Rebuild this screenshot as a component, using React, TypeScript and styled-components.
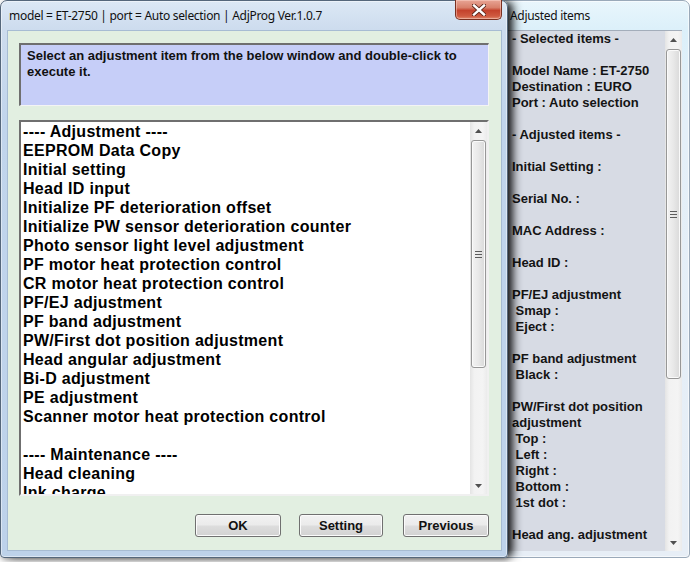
import React from 'react';
import styled, { createGlobalStyle } from 'styled-components';

const GlobalStyle = createGlobalStyle`
  html, body {
    margin: 0;
    padding: 0;
    background: #ffffff;
  }
  body {
    width: 690px;
    height: 562px;
    overflow: hidden;
    font-family: "Liberation Sans", Arial, sans-serif;
  }
`;

const Desktop = styled.div`
  position: relative;
  width: 690px;
  height: 562px;
  overflow: hidden;
  background: #ffffff;
`;

const Window = styled.div<{ $left: number; $width: number; $active?: boolean }>`
  position: absolute;
  top: 0;
  left: ${p => p.$left}px;
  width: ${p => p.$width}px;
  height: 558px;
  box-sizing: border-box;
  display: flex;
  flex-direction: column;
  border: 1px solid ${p => (p.$active ? '#55677b' : '#9aa9b9')};
  border-radius: 7px 7px 4px 4px;
  padding: ${p => (p.$active ? '0 5px 6px 6px' : '0 7px 6px 3px')};
  background: ${p =>
    p.$active
      ? 'linear-gradient(to bottom, #dce8f5 0px, #cddcee 28px, #c1d5ec 120px, #bdd2ea 100%)'
      : 'linear-gradient(to bottom, #e9f6fc 0px, #dcf0fa 28px, #e4eff8 120px, #e7eef6 100%)'};
  box-shadow: ${p =>
    p.$active
      ? '7px 0 10px -2px rgba(0, 0, 0, 0.85), 1px 2px 6px rgba(0, 0, 0, 0.35), inset 0 0 0 1px rgba(255,255,255,0.45)'
      : 'inset 0 0 0 1px rgba(255,255,255,0.6)'};
  z-index: ${p => (p.$active ? 2 : 1)};
`;

const TitleBar = styled.div<{ $indent: number }>`
  height: 29px;
  flex: none;
  display: flex;
  align-items: center;
  padding-left: ${p => p.$indent}px;
  position: relative;
`;

const TitleText = styled.span`
  font-family: "Noto Sans", "Open Sans", sans-serif;
  font-size: 12px;
  color: #111111;
  white-space: nowrap;
  letter-spacing: -0.3px;
`;

const CloseButton = styled.div`
  position: absolute;
  top: -1px;
  right: 0;
  width: 47px;
  height: 20px;
  box-sizing: border-box;
  border: 1px solid #7a3020;
  border-top: none;
  border-radius: 0 0 5px 5px;
  background: linear-gradient(to bottom, #e8a595 0%, #d8806b 40%, #c4422c 55%, #cf5a40 85%, #e08a6e 100%);
  box-shadow: inset 0 0 0 1px rgba(255, 220, 210, 0.45);
  display: flex;
  align-items: center;
  justify-content: center;
`;

const Client = styled.div`
  flex: 1;
  box-sizing: border-box;
  border: 1px solid #a7bcd3;
  background: #e2efe1;
  padding: 12px 12px 13px 11px;
  display: flex;
  flex-direction: column;
`;

const InfoBox = styled.div`
  height: 63px;
  flex: none;
  box-sizing: border-box;
  background: #c6cef8;
  border-top: 2px solid #6f6f6f;
  border-left: 2px solid #6f6f6f;
  border-right: 1px solid #f4f4f4;
  border-bottom: 1px solid #f4f4f4;
  padding: 3px 8px 0 6px;
  font-size: 13px;
  font-weight: bold;
  line-height: 16px;
  color: #111111;
`;

const ListBox = styled.div`
  margin-top: 14px;
  height: 376px;
  flex: none;
  box-sizing: border-box;
  background: #ffffff;
  border-top: 2px solid #6f6f6f;
  border-left: 2px solid #6f6f6f;
  border-right: 2px solid #f0f0f0;
  border-bottom: 2px solid #f0f0f0;
  display: flex;
  overflow: hidden;
`;

const ListItems = styled.div`
  flex: 1;
  overflow: hidden;
  padding-left: 2px;
`;

const ListItem = styled.div`
  height: 19px;
  line-height: 19px;
  font-size: 16px;
  font-weight: bold;
  letter-spacing: 0.3px;
  color: #000000;
  white-space: pre;
`;

const ButtonRow = styled.div`
  margin-top: 18px;
  display: flex;
  justify-content: flex-end;
  gap: 18px;
`;

const PushButton = styled.button<{ $width: number }>`
  width: ${p => p.$width}px;
  height: 23px;
  box-sizing: border-box;
  border: 1px solid #707070;
  border-radius: 3px;
  background: linear-gradient(to bottom, #f2f2f2 0%, #ebebeb 48%, #dddddd 52%, #d2d2d2 100%);
  box-shadow: inset 0 0 0 1px #fbfbfb;
  font-family: "Liberation Sans", Arial, sans-serif;
  font-size: 13px;
  font-weight: bold;
  color: #111111;
  padding: 0;
  cursor: pointer;
`;

const ScrollBar = styled.div`
  width: 17px;
  flex: none;
  display: flex;
  flex-direction: column;
  background: linear-gradient(to right, #e4e4e4 0%, #f2f2f2 25%, #f4f4f4 75%, #ebebeb 100%);
`;

const ArrowBox = styled.div`
  height: 17px;
  flex: none;
  display: flex;
  align-items: center;
  justify-content: center;
`;

const Track = styled.div`
  flex: 1;
  display: flex;
  flex-direction: column;
`;

const Thumb = styled.div<{ $offset: number; $length: number }>`
  margin: ${p => p.$offset}px 1px 0 1px;
  height: ${p => p.$length}px;
  box-sizing: border-box;
  border: 1px solid #979797;
  border-radius: 3px;
  background: linear-gradient(to right, #f3f3f3 0%, #e8e8e8 50%, #d9d9d9 100%);
  box-shadow: inset 0 0 0 1px #fafafa;
  display: flex;
  align-items: center;
  justify-content: center;
`;

const SidePanel = styled.div`
  flex: 1;
  display: flex;
  box-sizing: border-box;
  border-top: 1px solid #a3adba;
  background: #d7dbe4;
  overflow: hidden;
`;

const SideText = styled.div`
  flex: 1;
  padding-left: 12px;
  overflow: hidden;
`;

const SideLine = styled.div`
  height: 16px;
  line-height: 16px;
  font-size: 13px;
  font-weight: bold;
  color: #141414;
  white-space: pre;
`;

const Arrow = ({ up }: { up?: boolean }) => (
  <svg width="7" height="4" viewBox="0 0 7 4">
    <polygon points={up ? '0,4 7,4 3.5,0' : '0,0 7,0 3.5,4'} fill="#505050" />
  </svg>
);

const Grip = () => (
  <svg width="7" height="7" viewBox="0 0 7 7">
    <rect x="0" y="0" width="7" height="1" fill="#5c5c5c" />
    <rect x="0" y="3" width="7" height="1" fill="#5c5c5c" />
    <rect x="0" y="6" width="7" height="1" fill="#5c5c5c" />
  </svg>
);

const CloseGlyph = () => (
  <svg width="14" height="12" viewBox="0 0 14 12">
    <path d="M2 1.5 L12 10.5 M12 1.5 L2 10.5" stroke="#5a2418" strokeWidth="4.2" strokeLinecap="square" />
    <path d="M2 1.5 L12 10.5 M12 1.5 L2 10.5" stroke="#ffffff" strokeWidth="2.4" strokeLinecap="square" />
  </svg>
);

const VScroll = ({ offset, length }: { offset: number; length: number }) => (
  <ScrollBar>
    <ArrowBox>
      <Arrow up />
    </ArrowBox>
    <Track>
      <Thumb $offset={offset} $length={length}>
        <Grip />
      </Thumb>
    </Track>
    <ArrowBox>
      <Arrow />
    </ArrowBox>
  </ScrollBar>
);

const menuItems = [
  '---- Adjustment ----',
  'EEPROM Data Copy',
  'Initial setting',
  'Head ID input',
  'Initialize PF deterioration offset',
  'Initialize PW sensor deterioration counter',
  'Photo sensor light level adjustment',
  'PF motor heat protection control',
  'CR motor heat protection control',
  'PF/EJ adjustment',
  'PF band adjustment',
  'PW/First dot position adjustment',
  'Head angular adjustment',
  'Bi-D adjustment',
  'PE adjustment',
  'Scanner motor heat protection control',
  '',
  '---- Maintenance ----',
  'Head cleaning',
  'Ink charge',
];

const adjustedLines = [
  '- Selected items -',
  '',
  'Model Name : ET-2750',
  'Destination : EURO',
  'Port : Auto selection',
  '',
  '- Adjusted items -',
  '',
  'Initial Setting :',
  '',
  'Serial No. :',
  '',
  'MAC Address :',
  '',
  'Head ID :',
  '',
  'PF/EJ adjustment',
  ' Smap :',
  ' Eject :',
  '',
  'PF band adjustment',
  ' Black :',
  '',
  'PW/First dot position',
  'adjustment',
  ' Top :',
  ' Left :',
  ' Right :',
  ' Bottom :',
  ' 1st dot :',
  '',
  'Head ang. adjustment',
];

const App: React.FC = () => {
  return (
    <>
      <GlobalStyle />
      <Desktop>
        <Window $left={496} $width={194}>
          <TitleBar $indent={10}>
            <TitleText>Adjusted items</TitleText>
          </TitleBar>
          <SidePanel>
            <SideText>
              {adjustedLines.map((line, i) => (
                <SideLine key={i}>{line || ' '}</SideLine>
              ))}
            </SideText>
            <VScroll offset={1} length={330} />
          </SidePanel>
        </Window>

        <Window $left={0} $width={508} $active>
          <TitleBar $indent={2}>
            <TitleText>model = ET-2750 | port = Auto selection | AdjProg Ver.1.0.7</TitleText>
            <CloseButton>
              <CloseGlyph />
            </CloseButton>
          </TitleBar>
          <Client>
            <InfoBox>
              Select an adjustment item from the below window and double-click to execute it.
            </InfoBox>
            <ListBox>
              <ListItems>
                {menuItems.map((item, i) => (
                  <ListItem key={i}>{item || ' '}</ListItem>
                ))}
              </ListItems>
              <VScroll offset={1} length={228} />
            </ListBox>
            <ButtonRow>
              <PushButton $width={86}>OK</PushButton>
              <PushButton $width={84}>Setting</PushButton>
              <PushButton $width={86} style={{ marginLeft: 2 }}>Previous</PushButton>
            </ButtonRow>
          </Client>
        </Window>
      </Desktop>
    </>
  );
};

export default App;
